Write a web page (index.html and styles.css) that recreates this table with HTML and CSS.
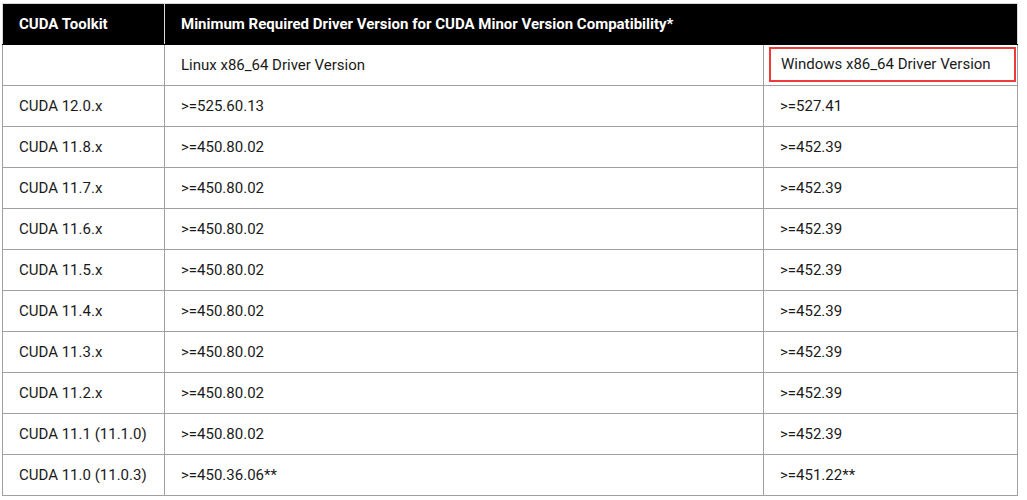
FILE: index.html
```html
<!DOCTYPE html>
<html>
<head>
<meta charset="utf-8">
<link rel="stylesheet" href="styles.css">
</head>
<body>
<table class="compat">
  <colgroup>
    <col class="c1"><col class="c2"><col class="c3">
  </colgroup>
  <thead>
    <tr class="head">
      <th>CUDA Toolkit</th>
      <th colspan="2">Minimum Required Driver Version for CUDA Minor Version Compatibility*</th>
    </tr>
  </thead>
  <tbody>
    <tr>
      <td></td>
      <td>Linux x86_64 Driver Version</td>
      <td class="marked-cell"><span class="marked">Windows x86_64 Driver Version</span></td>
    </tr>
    <tr><td>CUDA 12.0.x</td><td>&gt;=525.60.13</td><td>&gt;=527.41</td></tr>
    <tr><td>CUDA 11.8.x</td><td>&gt;=450.80.02</td><td>&gt;=452.39</td></tr>
    <tr><td>CUDA 11.7.x</td><td>&gt;=450.80.02</td><td>&gt;=452.39</td></tr>
    <tr><td>CUDA 11.6.x</td><td>&gt;=450.80.02</td><td>&gt;=452.39</td></tr>
    <tr><td>CUDA 11.5.x</td><td>&gt;=450.80.02</td><td>&gt;=452.39</td></tr>
    <tr><td>CUDA 11.4.x</td><td>&gt;=450.80.02</td><td>&gt;=452.39</td></tr>
    <tr><td>CUDA 11.3.x</td><td>&gt;=450.80.02</td><td>&gt;=452.39</td></tr>
    <tr><td>CUDA 11.2.x</td><td>&gt;=450.80.02</td><td>&gt;=452.39</td></tr>
    <tr><td>CUDA 11.1 (11.1.0)</td><td>&gt;=450.80.02</td><td>&gt;=452.39</td></tr>
    <tr><td>CUDA 11.0 (11.0.3)</td><td>&gt;=450.36.06**</td><td>&gt;=451.22**</td></tr>
  </tbody>
</table>
</body>
</html>
```
FILE: styles.css
```css
html, body {
  margin: 0;
  padding: 0;
  background: #ffffff;
}
body {
  padding: 3px 0 0 2px;
  font-family: Roboto, "Liberation Sans", sans-serif;
  font-size: 15px;
  color: #1a1a1a;
}
.compat {
  border-collapse: collapse;
  table-layout: fixed;
  width: 1015px;
}
.c1 { width: 162px; }
.c2 { width: 599px; }
.c3 { width: 254px; }
.compat th,
.compat td {
  height: 40px;
  padding: 0 16px;
  text-align: left;
  vertical-align: middle;
  border: 1px solid #a0a0a0;
  white-space: nowrap;
}
.head th {
  background: #000000;
  color: #ffffff;
  font-weight: 700;
  border-color: #d8d8d8;
  border-bottom-color: #000;
}
.compat td.marked-cell {
  padding: 0 1px 0 5px;
}
.marked {
  display: block;
  height: 31px;
  line-height: 31px;
  margin: 1px 0 3px 0;
  padding: 0 10px;
  border: 2px solid #f03a3a;
}
```
